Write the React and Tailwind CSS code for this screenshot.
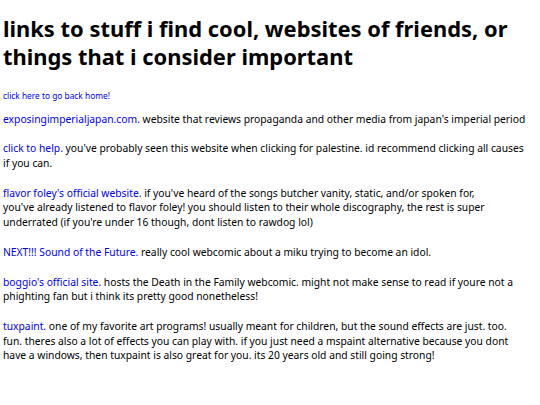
import React from "react";

const items = [
  {
    link: "exposingimperialjapan.com.",
    lines: [" website that reviews propaganda and other media from japan's imperial period"],
  },
  {
    link: "click to help.",
    lines: [
      " you've probably seen this website when clicking for palestine. id recommend clicking all causes",
      "if you can.",
    ],
  },
  {
    link: "flavor foley's official website.",
    lines: [
      " if you've heard of the songs butcher vanity, static, and/or spoken for,",
      "you've already listened to flavor foley! you should listen to their whole discography, the rest is super",
      "underrated (if you're under 16 though, dont listen to rawdog lol)",
    ],
  },
  {
    link: "NEXT!!! Sound of the Future.",
    lines: [" really cool webcomic about a miku trying to become an idol."],
  },
  {
    link: "boggio's official site.",
    lines: [
      " hosts the Death in the Family webcomic. might not make sense to read if youre not a",
      "phighting fan but i think its pretty good nonetheless!",
    ],
  },
  {
    link: "tuxpaint.",
    lines: [
      " one of my favorite art programs! usually meant for children, but the sound effects are just. too.",
      "fun. theres also a lot of effects you can play with. if you just need a mspaint alternative because you dont",
      "have a windows, then tuxpaint is also great for you. its 20 years old and still going strong!",
    ],
  },
];

export default function App() {
  return (
    <div className="min-h-screen w-[540px] bg-white pl-[3px] pt-[14.5px] font-['Noto_Sans',sans-serif] text-black">
      <h1 className="whitespace-nowrap text-[21.9px] font-bold leading-[28px]">
        links to stuff i find cool, websites of friends, or
        <br />
        things that i consider important
      </h1>
      <a href="#" className="mt-[19.5px] block text-[8.35px] leading-[11.6px] text-[#0000ee]">
        click here to go back home!
      </a>
      <div className="mt-[10px] flex flex-col gap-[15px] text-[10.3px] leading-[14.7px]">
        {items.map((it) => (
          <p key={it.link} className="whitespace-nowrap">
            <a href="#" className="text-[#0000ee]">
              {it.link}
            </a>
            {it.lines.map((l, i) => (
              <React.Fragment key={i}>
                {i > 0 && <br />}
                {l}
              </React.Fragment>
            ))}
          </p>
        ))}
      </div>
    </div>
  );
}
